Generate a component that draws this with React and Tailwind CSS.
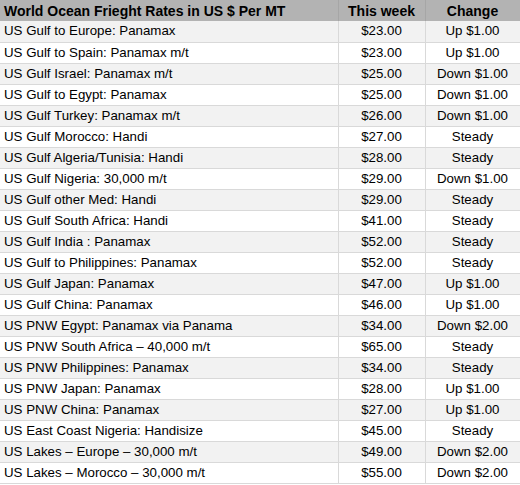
import React from 'react';

const rows = [
  ['US Gulf to Europe: Panamax', '$23.00', 'Up $1.00'],
  ['US Gulf to Spain: Panamax m/t', '$23.00', 'Up $1.00'],
  ['US Gulf Israel: Panamax m/t', '$25.00', 'Down $1.00'],
  ['US Gulf to Egypt: Panamax', '$25.00', 'Down $1.00'],
  ['US Gulf Turkey: Panamax m/t', '$26.00', 'Down $1.00'],
  ['US Gulf Morocco: Handi', '$27.00', 'Steady'],
  ['US Gulf Algeria/Tunisia: Handi', '$28.00', 'Steady'],
  ['US Gulf Nigeria: 30,000 m/t', '$29.00', 'Down $1.00'],
  ['US Gulf other Med: Handi', '$29.00', 'Steady'],
  ['US Gulf South Africa: Handi', '$41.00', 'Steady'],
  ['US Gulf India : Panamax', '$52.00', 'Steady'],
  ['US Gulf to Philippines: Panamax', '$52.00', 'Steady'],
  ['US Gulf Japan: Panamax', '$47.00', 'Up $1.00'],
  ['US Gulf China: Panamax', '$46.00', 'Up $1.00'],
  ['US PNW Egypt: Panamax via Panama', '$34.00', 'Down $2.00'],
  ['US PNW South Africa – 40,000 m/t', '$65.00', 'Steady'],
  ['US PNW Philippines: Panamax', '$34.00', 'Steady'],
  ['US PNW Japan: Panamax', '$28.00', 'Up $1.00'],
  ['US PNW China: Panamax', '$27.00', 'Up $1.00'],
  ['US East Coast Nigeria: Handisize', '$45.00', 'Steady'],
  ['US Lakes – Europe – 30,000 m/t', '$49.00', 'Down $2.00'],
  ['US Lakes – Morocco – 30,000 m/t', '$55.00', 'Down $2.00'],
];

export default function App() {
  return (
    <div className="w-[520px] h-[485px] bg-white overflow-hidden font-['Liberation_Sans',Arial,sans-serif] text-[13.3px] text-black">
      <table className="w-[520px] border-collapse table-fixed">
        <colgroup>
          <col className="w-[338px]" />
          <col className="w-[87px]" />
          <col className="w-[95px]" />
        </colgroup>
        <thead>
          <tr className="bg-[#b3b3b3] h-[21px] text-[14px]">
            <th className="text-left font-bold px-[4px] leading-[20px] border-r border-[#a6a6a6]">World Ocean Frieght Rates in US $ Per MT</th>
            <th className="text-center font-bold leading-[20px] border-r border-[#a6a6a6]">This week</th>
            <th className="text-center font-bold leading-[20px] border-r border-[#a6a6a6]">Change</th>
          </tr>
        </thead>
        <tbody>
          {rows.map((r, i) => (
            <tr key={i} className={`h-[21px] border-b border-[#d9d9d9] ${i % 2 === 0 ? 'bg-[#f2f2f2]' : 'bg-white'}`}>
              <td className="px-[4px] leading-[20px] whitespace-nowrap border-r border-[#d9d9d9]">{r[0]}</td>
              <td className="text-center leading-[20px] border-r border-[#d9d9d9]">{r[1]}</td>
              <td className="text-center leading-[20px] border-r border-[#d9d9d9]">{r[2]}</td>
            </tr>
          ))}
        </tbody>
      </table>
    </div>
  );
}
